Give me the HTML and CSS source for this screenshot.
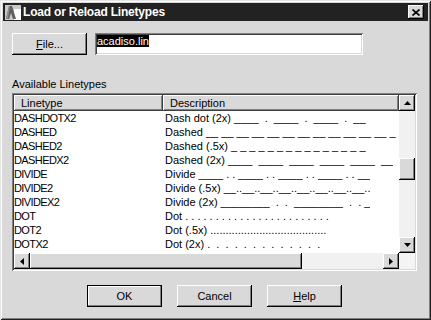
FILE: index.html
```html
<!DOCTYPE html>
<html lang="en">
<head>
    <meta charset="UTF-8">
    <title>Load or Reload Linetypes</title>
    <link rel="stylesheet" href="styles.css">
</head>
<body>
    <div class="window">
        <div class="titlebar">
            <svg class="app-icon" width="16" height="16" viewBox="0 0 16 16">
                <rect x="0" y="1" width="16" height="15" fill="#c8c8c8"/>
                <rect x="9" y="5" width="7" height="11" fill="#ffffff"/>
                <polygon points="1,15 4,2 7,2 11,15 8,15 6,9 4,15" fill="#606060"/>
                <polygon points="4,2 5,2 3,15 1,15" fill="#909090"/>
            </svg>
            <span class="title">Load or Reload Linetypes</span>
            <span class="close">
                <svg width="8" height="7" viewBox="0 0 8 7">
                    <path d="M0.5 0.5 L7.5 6.5 M7.5 0.5 L0.5 6.5" stroke="#000" stroke-width="1.6"/>
                </svg>
            </span>
        </div>

        <div class="content">
            <div class="file-row">
                <button class="btn"><u>F</u>ile...</button>
                <div class="field"><span class="selected">acadiso.lin</span></div>
            </div>

            <div class="group-label">Available Linetypes</div>

            <div class="listbox">
                <div class="list-main">
                    <div class="list-header">
                        <div class="hcell col-name">Linetype</div>
                        <div class="hcell col-desc">Description</div>
                    </div>
                    <div class="row"><span class="col-name">DASHDOTX2</span><span class="col-desc">Dash dot (2x) ____  .  ____  .  ____  .  __</span></div>
                    <div class="row"><span class="col-name">DASHED</span><span class="col-desc">Dashed __ __ __ __ __ __ __ __ __ __ __ __ _</span></div>
                    <div class="row"><span class="col-name">DASHED2</span><span class="col-desc">Dashed (.5x) _ _ _ _ _ _ _ _ _ _ _ _ _ _ _</span></div>
                    <div class="row"><span class="col-name">DASHEDX2</span><span class="col-desc">Dashed (2x) ____  ____  ____  ____  ____  __</span></div>
                    <div class="row"><span class="col-name">DIVIDE</span><span class="col-desc">Divide ____ . . ____ . . ____ . . ____ . . __</span></div>
                    <div class="row"><span class="col-name">DIVIDE2</span><span class="col-desc">Divide (.5x) __..__..__..__..__..__..__..__..</span></div>
                    <div class="row"><span class="col-name">DIVIDEX2</span><span class="col-desc">Divide (2x) ________  .  .  ________  .  . _</span></div>
                    <div class="row"><span class="col-name">DOT</span><span class="col-desc">Dot . . . . . . . . . . . . . . . . . . . . . . . .</span></div>
                    <div class="row"><span class="col-name">DOT2</span><span class="col-desc">Dot (.5x) ......................................</span></div>
                    <div class="row"><span class="col-name">DOTX2</span><span class="col-desc">Dot (2x) .  .  .  .  .  .  .  .  .  .  .  .  .</span></div>
                </div>

                <div class="vscroll">
                    <div class="sbtn">
                        <svg width="7" height="4" viewBox="0 0 7 4"><polygon points="3.5,0 7,4 0,4" fill="#000"/></svg>
                    </div>
                    <div class="vtrack"><div class="vthumb"></div></div>
                    <div class="sbtn">
                        <svg width="7" height="4" viewBox="0 0 7 4"><polygon points="0,0 7,0 3.5,4" fill="#000"/></svg>
                    </div>
                </div>

                <div class="hscroll">
                    <div class="sbtn">
                        <svg width="4" height="7" viewBox="0 0 4 7"><polygon points="4,0 4,7 0,3.5" fill="#000"/></svg>
                    </div>
                    <div class="hthumb"></div>
                    <div class="htrack"></div>
                    <div class="sbtn">
                        <svg width="4" height="7" viewBox="0 0 4 7"><polygon points="0,0 4,3.5 0,7" fill="#000"/></svg>
                    </div>
                </div>

                <div class="corner"></div>
            </div>

            <div class="button-row">
                <button class="btn default">OK</button>
                <button class="btn">Cancel</button>
                <button class="btn"><u>H</u>elp</button>
            </div>
        </div>
    </div>
</body>
</html>
```

FILE: styles.css
```css
body {
    margin: 0;
    font-family: "Liberation Sans", Arial, sans-serif;
    font-size: 11px;
    color: #000;
    background: #d9d9d9;
}
.window {
    width: 431px;
    height: 320px;
    box-sizing: border-box;
    padding: 3px;
    background: #d9d9d9;
    box-shadow: inset 1px 1px #e4e4e4, inset -1px -1px #202020,
                inset 2px 2px #ffffff, inset -2px -2px #808080;
    display: flex;
    flex-direction: column;
}
.titlebar {
    height: 18px;
    background: #222222;
    color: #fff;
    display: flex;
    align-items: center;
    padding: 0 4px 0 2px;
}
.app-icon {
    flex: none;
}
.title {
    margin-left: 2px;
    font-weight: bold;
    font-size: 12px;
    letter-spacing: -0.2px;
    flex: 1;
}
.close {
    width: 16px;
    height: 14px;
    box-sizing: border-box;
    background: #d9d9d9;
    box-shadow: inset -1px -1px #000, inset 1px 1px #fff, inset -2px -2px #808080;
    display: flex;
    align-items: center;
    justify-content: center;
}
.content {
    flex: 1;
    padding: 12px 11px 0 9px;
    display: flex;
    flex-direction: column;
}
.file-row {
    display: flex;
    gap: 8px;
    height: 22px;
}
.btn {
    width: 75px;
    height: 22px;
    box-sizing: border-box;
    border: none;
    padding: 0;
    margin: 0;
    background: #d9d9d9;
    font-family: inherit;
    font-size: 11px;
    color: #000;
    box-shadow: inset -1px -1px #000, inset 1px 1px #fff, inset -2px -2px #808080;
}
.btn.default {
    box-shadow: inset 0 0 0 1px #000, inset -2px -2px #808080, inset 2px 2px #fff;
}
.field {
    width: 268px;
    height: 22px;
    box-sizing: border-box;
    padding: 2px 2px 0 2px;
    background: #fff;
    line-height: 12px;
    box-shadow: inset 1px 1px #808080, inset -1px -1px #fff,
                inset 2px 2px #404040, inset -2px -2px #d9d9d9;
}
.selected {
    display: inline-block;
    background: #000;
    color: #fff;
    height: 12px;
}
.group-label {
    margin-top: 23px;
    line-height: 13px;
}
.listbox {
    margin-top: 2px;
    width: 405px;
    height: 178px;
    box-sizing: border-box;
    padding: 2px;
    background: #fff;
    box-shadow: inset 1px 1px #808080, inset -1px -1px #fff,
                inset 2px 2px #404040, inset -2px -2px #d9d9d9;
    display: grid;
    grid-template-columns: 385px 16px;
    grid-template-rows: 158px 16px;
}
.list-main {
    overflow: hidden;
}
.list-header {
    display: flex;
    height: 16px;
}
.hcell {
    box-sizing: border-box;
    height: 16px;
    line-height: 16px;
    padding-left: 7px;
    background: #d9d9d9;
    box-shadow: inset -1px -1px #404040, inset 1px 1px #fff, inset -2px -2px #808080;
}
.hcell.col-name {
    width: 149px;
}
.hcell.col-desc {
    flex: 1;
}
.row {
    display: flex;
    height: 14px;
    line-height: 14px;
    white-space: pre;
}
.row .col-name {
    width: 149px;
    flex: none;
    letter-spacing: -0.6px;
}
.row .col-desc {
    padding-left: 2px;
    overflow: hidden;
}
.vscroll {
    display: flex;
    flex-direction: column;
}
.hscroll {
    display: flex;
}
.sbtn {
    width: 16px;
    height: 16px;
    flex: none;
    box-sizing: border-box;
    background: #d9d9d9;
    box-shadow: inset -1px -1px #000, inset 1px 1px #fff, inset -2px -2px #808080;
    display: flex;
    align-items: center;
    justify-content: center;
}
.vtrack {
    flex: 1;
    background: #f1f1f1;
    padding-top: 47px;
}
.vthumb {
    height: 22px;
    box-sizing: border-box;
    background: #d9d9d9;
    box-shadow: inset -1px -1px #000, inset 1px 1px #fff, inset -2px -2px #808080;
}
.hthumb {
    width: 272px;
    height: 16px;
    box-sizing: border-box;
    background: #d9d9d9;
    box-shadow: inset -1px -1px #000, inset 1px 1px #fff, inset -2px -2px #808080;
}
.htrack {
    flex: 1;
    background: #f1f1f1;
}
.corner {
    background: #f4f4f4;
}
.button-row {
    margin-top: 14px;
    display: flex;
    justify-content: center;
    gap: 15px;
}
```
